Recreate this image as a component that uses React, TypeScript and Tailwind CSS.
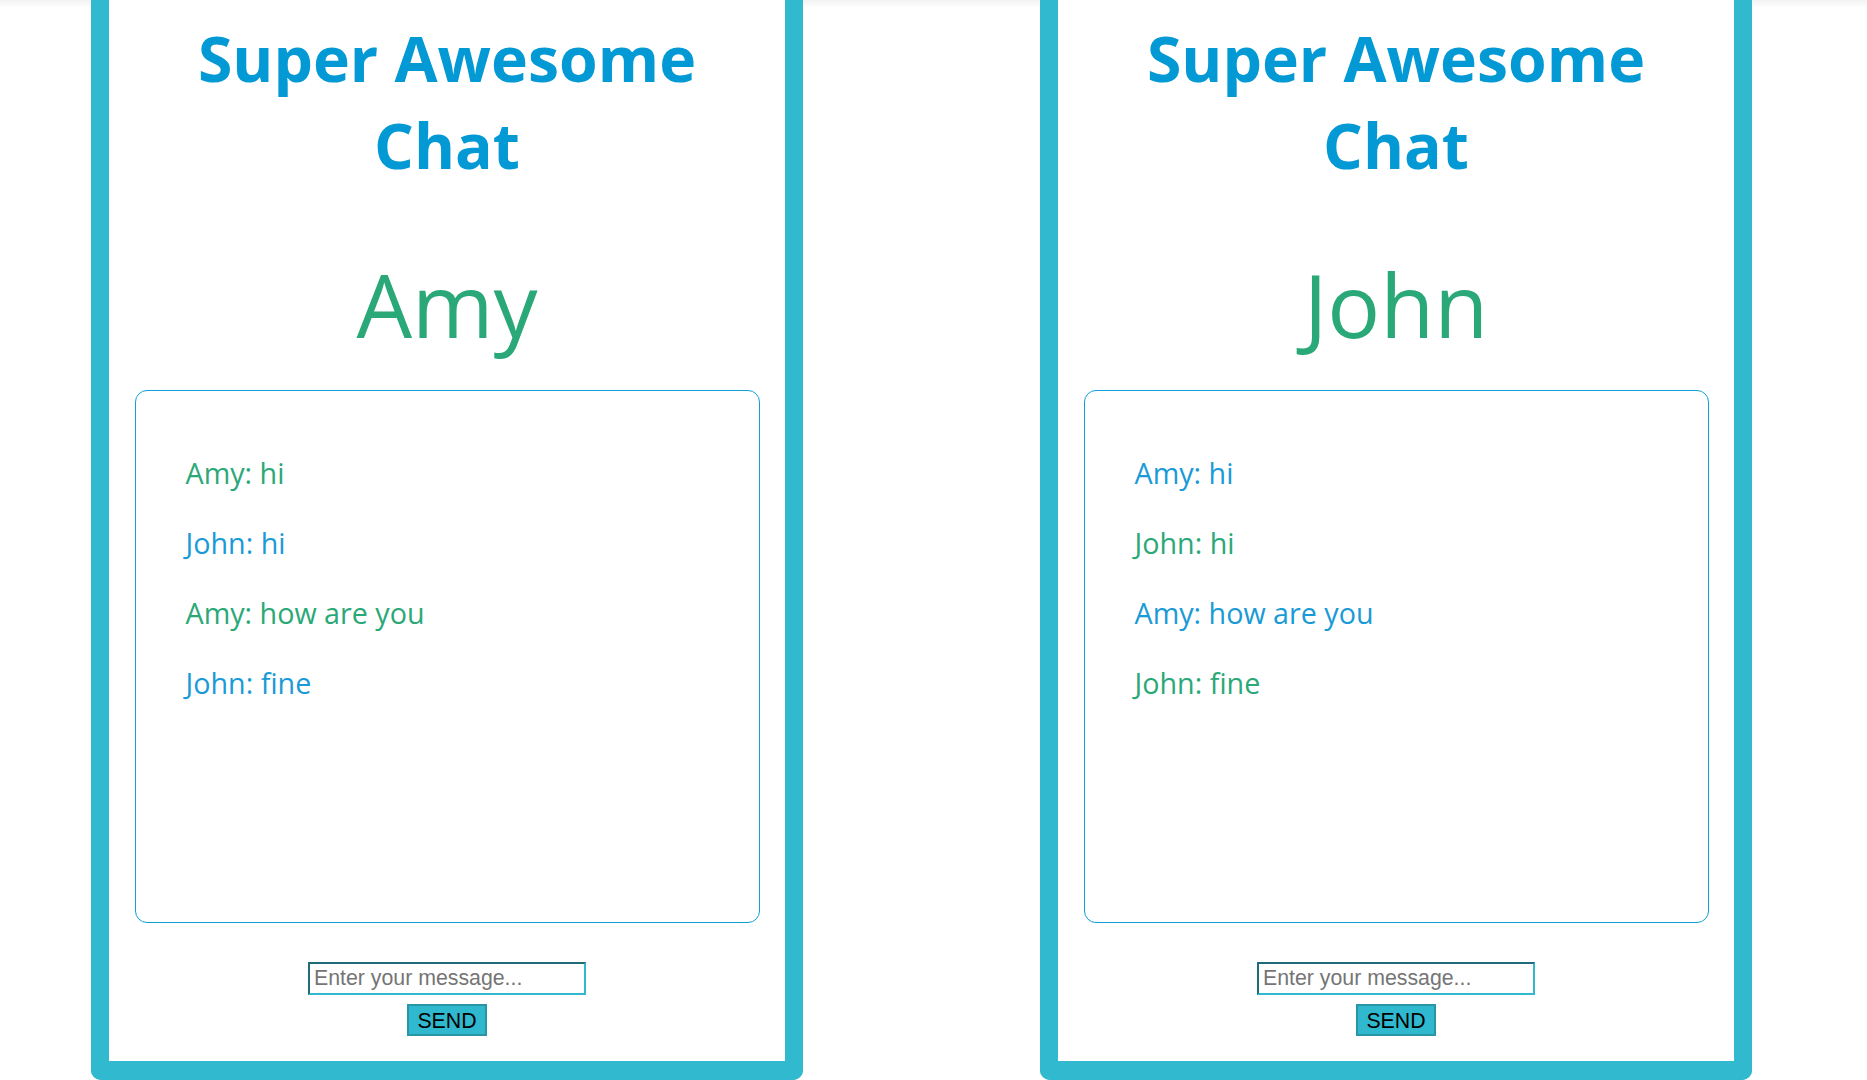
const messages = [
  { from: "Amy", text: "hi" },
  { from: "John", text: "hi" },
  { from: "Amy", text: "how are you" },
  { from: "John", text: "fine" },
];

const ChatPanel = ({ user }: { user: string }) => {
  return (
    <div className="w-[712px] shrink-0 border-x-[18px] border-b-[19px] border-[#30b9cf] rounded-b-[10px] bg-white flex flex-col items-center pt-[14px] pb-[25px]">
      <h1 className="text-[62.5px] leading-[87px] font-bold text-[#0399d5] text-center font-['Open_Sans',sans-serif]">
        Super Awesome
        <br />
        Chat
      </h1>
      <h2 className="mt-[56px] text-[88px] leading-[120px] text-[#2aa878] font-['Open_Sans',sans-serif]">
        {user}
      </h2>
      <div className="mt-[26px] w-[625px] h-[533px] border border-[#0f9fd6] rounded-[12px] pt-[61px] pl-[50px] flex flex-col gap-[29px] font-['Open_Sans',sans-serif]">
        {messages.map((m, i) => (
          <p
            key={i}
            className={
              m.from === user
                ? "text-[28.7px] leading-[41px] text-[#2aa878]"
                : "text-[28.7px] leading-[41px] text-[#1a9ad6]"
            }
          >
            {m.from}: {m.text}
          </p>
        ))}
      </div>
      <input
        type="text"
        placeholder="Enter your message..."
        className="mt-[39px] w-[278px] h-[33px] border-2 border-t-[#1f6c78] border-l-[#1f6c78] border-r-[#30b8cf] border-b-[#30b8cf] px-[4px] text-[21.3px] font-['Liberation_Sans',Arial,sans-serif] placeholder:text-[#757575] outline-none"
      />
      <button className="mt-[9px] w-[80px] h-[32px] bg-[#30b8cf] border-2 border-[#2a95a5] text-[21.3px] text-black font-['Liberation_Sans',Arial,sans-serif]">
        SEND
      </button>
    </div>
  );
};

export default function App() {
  return (
    <div className="relative min-h-screen bg-white">
      <div className="absolute top-0 left-0 right-0 h-[8px] bg-gradient-to-b from-black/5 to-transparent" />
      <div className="relative flex pl-[91px] gap-[237px]">
        <ChatPanel user="Amy" />
        <ChatPanel user="John" />
      </div>
    </div>
  );
}
